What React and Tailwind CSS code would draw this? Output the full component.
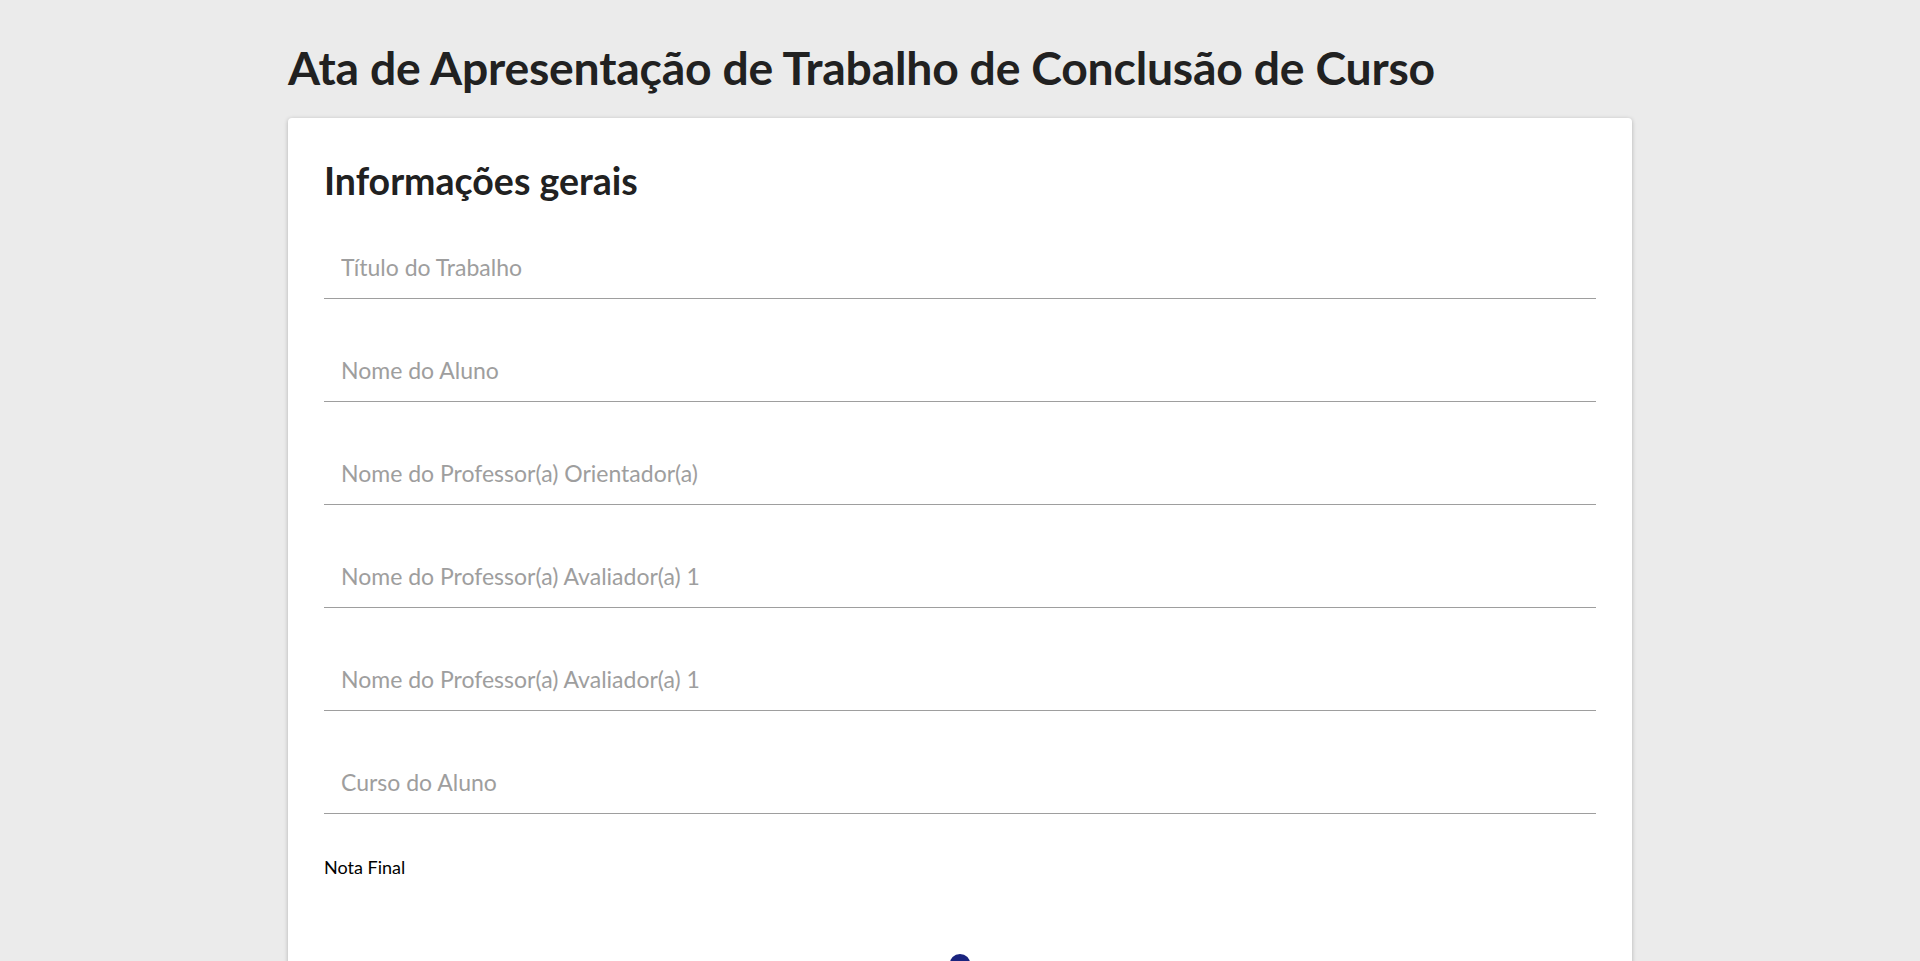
import { useState } from "react";

const fields = [
  "Título do Trabalho",
  "Nome do Aluno",
  "Nome do Professor(a) Orientador(a)",
  "Nome do Professor(a) Avaliador(a) 1",
  "Nome do Professor(a) Avaliador(a) 1",
  "Curso do Aluno",
];

export default function App() {
  const [values, setValues] = useState(fields.map(() => ""));
  const [nota, setNota] = useState(5);

  return (
    <div className="min-h-screen bg-[#ebebeb] font-['Lato','Noto_Sans',sans-serif] text-[#212121]">
      <div className="w-[70%] mx-auto pt-[39px] pb-10">
        <h1 className="text-[46.3px] font-bold leading-[56px] tracking-[-0.2px]">
          Ata de Apresentação de Trabalho de Conclusão de Curso
        </h1>
        <div className="mt-[23px] bg-white rounded shadow-[0_1px_4px_rgba(0,0,0,0.25)] px-9 pt-[41px] pb-10">
          <h2 className="text-[37.5px] font-bold leading-[44px]">Informações gerais</h2>
          <div className="mt-[32px] flex flex-col gap-[39px]">
            {fields.map((f, i) => (
              <input
                key={i}
                value={values[i]}
                onChange={(e) =>
                  setValues((prev) => prev.map((v, j) => (j === i ? e.target.value : v)))
                }
                placeholder={f}
                className="h-[64px] w-full px-[17px] text-[23px] border-b border-[#9e9e9e] outline-none placeholder:text-[#9e9e9e] bg-transparent"
              />
            ))}
          </div>
          <div className="mt-[40px] text-[18px] text-black">Nota Final</div>
          <div className="relative mt-[73px] h-5">
            <div className="absolute left-1/2 top-0 -translate-x-1/2 w-[21px] h-[21px] rounded-full bg-[#1a237e]" />
            <input
              type="range"
              min="0"
              max="10"
              value={nota}
              onChange={(e) => setNota(Number(e.target.value))}
              className="absolute inset-0 opacity-0 w-full"
            />
          </div>
        </div>
      </div>
    </div>
  );
}
